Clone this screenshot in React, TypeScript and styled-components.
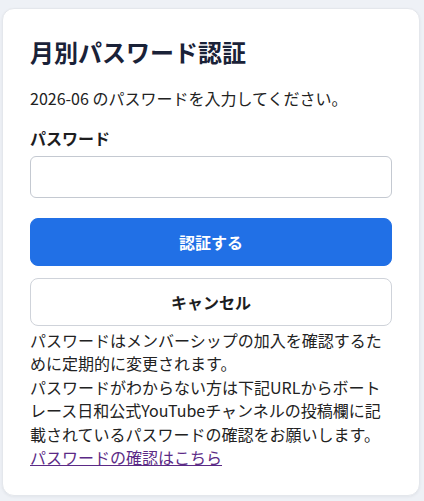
import { FC } from 'react';
import styled, { createGlobalStyle } from 'styled-components';

const GlobalStyle = createGlobalStyle`
    * {
        box-sizing: border-box;
    }

    body {
        margin: 0;
        background: #eef1f6;
        font-family: 'Noto Sans CJK JP', 'Noto Sans', sans-serif;
        color: #222;
    }
`;

const Page = styled.div`
    padding: 8px 4px 4px 2px;
`;

// ----------------------------------------------------------------------------

const Card = styled.div`
    background: #fff;
    border: 1px solid #e4e7ec;
    border-radius: 12px;
    box-shadow: 0 1px 3px rgba(20, 30, 50, 0.06);

    display: flex;
    flex-direction: column;

    padding: 27px 27px 26px;
`;

const Title = styled.h1`
    margin: 0 0 19px;

    font-size: 24px;
    line-height: 31px;
    font-weight: 700;
    color: #1a2238;
`;

const Lead = styled.p`
    margin: 0 0 16px;

    font-size: 16px;
    line-height: 24px;
`;

const FieldLabel = styled.label`
    margin-bottom: 6px;

    font-size: 16px;
    line-height: 24px;
    font-weight: 700;
    color: #1d1d1f;
`;

const PasswordInput = styled.input`
    width: 100%;
    height: 42px;

    border: 1px solid #c4c9d1;
    border-radius: 6px;
    outline: 0;

    padding: 0 12px;

    font-family: inherit;
    font-size: 16px;
`;

const Button = styled.button<{ $primary?: boolean }>`
    width: 100%;
    height: 48px;

    border-radius: 8px;
    border: 1px solid ${({ $primary }) => ($primary ? '#2170e6' : '#cfd3da')};
    background: ${({ $primary }) => ($primary ? '#2170e6' : '#fff')};
    color: ${({ $primary }) => ($primary ? '#fff' : '#1d1d1f')};

    font-family: inherit;
    font-size: 16px;
    font-weight: 700;

    cursor: pointer;
`;

const Actions = styled.div`
    display: flex;
    flex-direction: column;
    gap: 12px;

    margin-top: 20px;
`;

// ----------------------------------------------------------------------------

const Notes = styled.div`
    margin-top: 3px;

    font-size: 16px;
    line-height: 23.4px;
    color: #222;

    p {
        margin: 0;
    }
`;

const NoteLink = styled.a`
    color: #5b2a86;
    text-decoration: underline;
`;

const App: FC = () => {
    return (
        <>
            <GlobalStyle />
            <Page>
                <Card>
                    <Title>月別パスワード認証</Title>
                    <Lead>2026-06 のパスワードを入力してください。</Lead>

                    <FieldLabel htmlFor="monthly-password">パスワード</FieldLabel>
                    <PasswordInput id="monthly-password" type="password" />

                    <Actions>
                        <Button $primary>認証する</Button>
                        <Button>キャンセル</Button>
                    </Actions>

                    <Notes>
                        <p>
                            パスワードはメンバーシップの加入を確認するために定期的に変更されます。
                        </p>
                        <p>
                            パスワードがわからない方は下記URLからボートレース日和公式YouTubeチャンネルの投稿欄に記載されているパスワードの確認をお願いします。
                        </p>
                        <NoteLink href="#">パスワードの確認はこちら</NoteLink>
                    </Notes>
                </Card>
            </Page>
        </>
    );
};

export default App;
